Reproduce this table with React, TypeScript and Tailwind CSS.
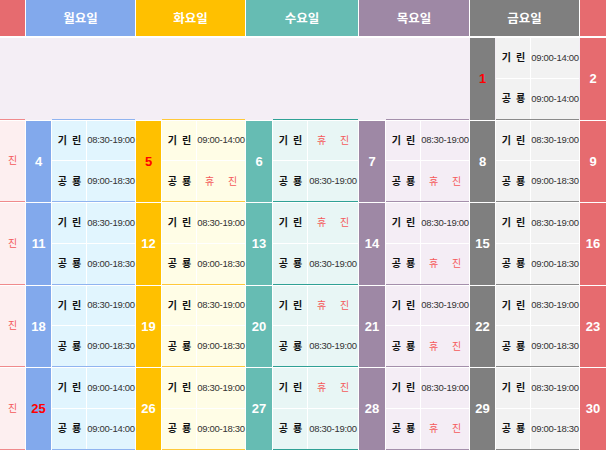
import React from 'react'

type Slot = string | null // null = 휴진

type Day = {
  date: number
  red?: boolean
  kirin: Slot
  gongryong: Slot
}

type Theme = {
  head: string
  cell: string
  line: string
}

const themes: Theme[] = [
  { head: 'bg-[#82a9ec]', cell: 'bg-[#e1f5fe]', line: 'border-[#90b4f0]' },
  { head: 'bg-[#ffc000]', cell: 'bg-[#fffde6]', line: 'border-[#ffc93a]' },
  { head: 'bg-[#66bcb3]', cell: 'bg-[#e8f6f5]', line: 'border-[#2fa195]' },
  { head: 'bg-[#9e88a5]', cell: 'bg-[#f4edf5]', line: 'border-[#a48fab]' },
  { head: 'bg-[#7f7f7f]', cell: 'bg-[#f2f2f2]', line: 'border-[#8a8a8a]' },
]

const dayNames = ['월요일', '화요일', '수요일', '목요일', '금요일']

const weeks: { days: (Day | null)[]; sat: number; sunOff: boolean }[] = [
  {
    sunOff: false,
    sat: 2,
    days: [null, null, null, null, { date: 1, red: true, kirin: '09:00-14:00', gongryong: '09:00-14:00' }],
  },
  {
    sunOff: true,
    sat: 9,
    days: [
      { date: 4, kirin: '08:30-19:00', gongryong: '09:00-18:30' },
      { date: 5, red: true, kirin: '09:00-14:00', gongryong: null },
      { date: 6, kirin: null, gongryong: '08:30-19:00' },
      { date: 7, kirin: '08:30-19:00', gongryong: null },
      { date: 8, kirin: '08:30-19:00', gongryong: '09:00-18:30' },
    ],
  },
  {
    sunOff: true,
    sat: 16,
    days: [
      { date: 11, kirin: '08:30-19:00', gongryong: '09:00-18:30' },
      { date: 12, kirin: '08:30-19:00', gongryong: '09:00-18:30' },
      { date: 13, kirin: null, gongryong: '08:30-19:00' },
      { date: 14, kirin: '08:30-19:00', gongryong: null },
      { date: 15, kirin: '08:30-19:00', gongryong: '09:00-18:30' },
    ],
  },
  {
    sunOff: true,
    sat: 23,
    days: [
      { date: 18, kirin: '08:30-19:00', gongryong: '09:00-18:30' },
      { date: 19, kirin: '08:30-19:00', gongryong: '09:00-18:30' },
      { date: 20, kirin: null, gongryong: '08:30-19:00' },
      { date: 21, kirin: '08:30-19:00', gongryong: null },
      { date: 22, kirin: '08:30-19:00', gongryong: '09:00-18:30' },
    ],
  },
  {
    sunOff: true,
    sat: 30,
    days: [
      { date: 25, red: true, kirin: '09:00-14:00', gongryong: '09:00-14:00' },
      { date: 26, kirin: '08:30-19:00', gongryong: '09:00-18:30' },
      { date: 27, kirin: null, gongryong: '08:30-19:00' },
      { date: 28, kirin: '08:30-19:00', gongryong: null },
      { date: 29, kirin: '08:30-19:00', gongryong: '09:00-18:30' },
    ],
  },
]

const cols =
  'grid grid-cols-[25px_25px_83px_25px_83px_26px_85px_26px_83px_25px_83px_1fr] gap-x-px'

const Closed = () => (
  <span className="flex gap-[14px] text-[10px] text-[#f45a5a]">
    <span>휴</span>
    <span>진</span>
  </span>
)

const Label = ({ a, b, bg }: { a: string; b: string; bg: string }) => (
  <div className={`flex items-center justify-center gap-[5px] pl-[1px] text-[10px] font-bold text-[#111] ${bg}`}>
    <span>{a}</span>
    <span>{b}</span>
  </div>
)

const Time = ({ slot, bg }: { slot: Slot; bg: string }) => (
  <div
    className={`flex items-center justify-center whitespace-nowrap text-[9.5px] tracking-[-0.3px] text-[#333] ${bg}`}
  >
    {slot ? slot : <Closed />}
  </div>
)

const DayCells = ({ day, theme }: { day: Day | null; theme: Theme }) => {
  if (!day) {
    return (
      <>
        <div />
        <div className={`border-b ${theme.line}`} />
      </>
    )
  }
  return (
    <>
      <div
        className={`flex items-center justify-center text-[13px] font-bold ${theme.head} ${
          day.red ? 'text-[#ff0000]' : 'text-white'
        }`}
      >
        {day.date}
      </div>
      <div className={`grid grid-cols-[34px_1fr] grid-rows-2 gap-px border-b bg-white ${theme.line}`}>
        <Label a="기" b="린" bg={theme.cell} />
        <Time slot={day.kirin} bg={theme.cell} />
        <Label a="공" b="룡" bg={theme.cell} />
        <Time slot={day.gongryong} bg={theme.cell} />
      </div>
    </>
  )
}

export default function App() {
  return (
    <div
      className="h-[450px] w-[606px] overflow-hidden bg-white"
      style={{ fontFamily: '"Liberation Sans", "Noto Sans CJK KR", sans-serif' }}
    >
      <div className={`${cols} h-[36px]`}>
        <div className="bg-[#e66b6f]" />
        {dayNames.map((n, i) => (
          <div
            key={n}
            className={`col-span-2 flex items-center justify-center pt-[2px] text-[12.5px] font-bold text-white ${themes[i].head}`}
          >
            {n}
          </div>
        ))}
        <div className="bg-[#e66b6f]" />
      </div>

      <div className="mt-[2px] flex flex-col gap-px">
        {weeks.map((w, wi) => (
          <div
            key={wi}
            className={`${cols} h-[81.5px] ${wi === 0 ? 'bg-[#f4eef5]' : 'bg-white'}`}
          >
            {w.sunOff ? (
              <div className="flex items-center justify-center border-b border-[#f08a8c] bg-[#fdeff0] text-[10px] text-[#f45a5a]">
                진
              </div>
            ) : (
              <div className="border-b border-[#f08a8c]" />
            )}
            {w.days.map((d, i) => (
              <DayCells key={i} day={d} theme={themes[i]} />
            ))}
            <div className="flex items-center justify-center bg-[#e66b6f] text-[13px] font-bold text-white">
              {w.sat}
            </div>
          </div>
        ))}
      </div>
    </div>
  )
}
